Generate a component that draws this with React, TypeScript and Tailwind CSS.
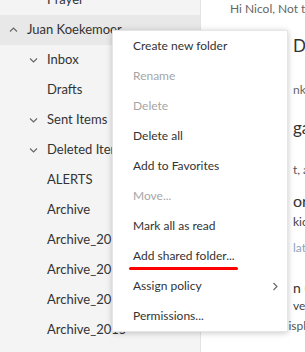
import React from "react";

type Folder = {
    label: string;
    level: 0 | 1;
    chevron?: "up" | "down";
    active?: boolean;
};

const folders: Folder[] = [
    { label: "Prayer", level: 1 },
    { label: "Juan Koekemoer", level: 0, chevron: "up", active: true },
    { label: "Inbox", level: 1, chevron: "down" },
    { label: "Drafts", level: 1 },
    { label: "Sent Items", level: 1, chevron: "down" },
    { label: "Deleted Items", level: 1, chevron: "down" },
    { label: "ALERTS", level: 1 },
    { label: "Archive", level: 1 },
    { label: "Archive_2018", level: 1 },
    { label: "Archive_2017", level: 1 },
    { label: "Archive_2016", level: 1 },
    { label: "Archive_2015", level: 1 },
];

const menuItems = [
    { label: "Create new folder" },
    { label: "Rename", disabled: true },
    { label: "Delete", disabled: true },
    { label: "Delete all" },
    { label: "Add to Favorites" },
    { label: "Move...", disabled: true },
    { label: "Mark all as read" },
    { label: "Add shared folder...", marked: true },
    { label: "Assign policy", submenu: true },
    { label: "Permissions..." },
];

const Chevron = ({ dir }: { dir: "up" | "down" | "right" }) => {
    const points =
        dir === "up" ? "1,5.5 4.5,2 8,5.5" : dir === "down" ? "1,2.5 4.5,6 8,2.5" : "2.5,1 6,4.5 2.5,8";
    return (
        <svg width="9" height="9" viewBox="0 0 9 9" fill="none">
            <polyline points={points} stroke="#666" strokeWidth="1.1" />
        </svg>
    );
};

// 메일 본문 (메뉴 뒤에 대부분 가려짐)
const previewLines = [
    { hidden: "", text: "Hi Nicol,  Not the newsletter", cls: "h-[18px] text-[12px] text-[#666]" },
    { hidden: "Re: ", text: "Daily Devotional", cls: "mt-[16px] h-[24px] text-[17px] text-[#333]" },
    { hidden: "Thank", text: "nk you all", cls: "mt-[23px] h-[18px] text-[12px] text-[#666]" },
    { hidden: "Re: ", text: "gathering", cls: "mt-[17px] h-[24px] text-[17px] text-[#333]" },
    { hidden: "Good", text: "t, all", cls: "mt-[21px] h-[18px] text-[12px] text-[#555]" },
    { hidden: "Pri", text: "orities", cls: "mt-[11px] h-[22px] text-[16px] text-[#333]" },
    { hidden: "Kick", text: "kickoff", cls: "mt-[1px] h-[18px] text-[12px] text-[#444]" },
    { hidden: "Upd", text: "later", cls: "mt-[8px] h-[18px] text-[12px] text-[#8ba3bf]" },
    { hidden: "Sun", text: "n (10am)", cls: "mt-[20px] h-[20px] text-[14px] text-[#333]" },
    { hidden: "Reser", text: "ved", cls: "h-[18px] text-[12px] text-[#444]" },
    { hidden: "", text: "email not displaying correctly", cls: "mt-[2px] h-[18px] text-[12px] text-[#555]" },
];

const App = () => {
    return (
        <div
            className="relative flex h-[352px] w-[305px] overflow-hidden bg-white"
            style={{ fontFamily: "Lato, 'Open Sans', sans-serif" }}
        >
            {/* 폴더 목록 */}
            <nav className="w-[201px] shrink-0 border-r border-[#e3e3e3] bg-[#f4f4f4]">
                <div className="-mt-[15px]">
                    {folders.map((f) => (
                        <div
                            key={f.label}
                            className={`flex h-[30px] items-center whitespace-nowrap text-[13px] text-[#333] ${
                                f.level === 0 ? "pl-[5px]" : "pl-[25px]"
                            } ${f.active ? "bg-[#e8e8e8]" : ""}`}
                        >
                            <span className="flex w-[16px] shrink-0 items-center justify-center">
                                {f.chevron && <Chevron dir={f.chevron} />}
                            </span>
                            <span className="ml-[6px]">{f.label}</span>
                        </div>
                    ))}
                </div>
            </nav>

            {/* 읽기 창 */}
            <div className="flex-1 overflow-hidden pl-[29px]">
                {previewLines.map((l, i) => (
                    <div key={i} className={`flex items-center whitespace-nowrap ${l.cls}`}>
                        {l.hidden && (
                            <span className="w-[63px] shrink-0 overflow-hidden">{l.hidden}</span>
                        )}
                        <span>{l.text}</span>
                    </div>
                ))}
            </div>

            {/* 컨텍스트 메뉴 */}
            <div className="absolute left-[112px] top-[30px] w-[176px] border border-[#e6e6e6] bg-white shadow-[0_1px_6px_rgba(0,0,0,0.22)]">
                {menuItems.map((m) => (
                    <div
                        key={m.label}
                        className={`flex h-[30px] items-center justify-between pl-[20px] pr-[7px] text-[12px] ${
                            m.disabled ? "text-[#a6a6a6]" : "text-[#333]"
                        }`}
                    >
                        <span className="relative">
                            {m.label}
                            {m.marked && (
                                <span className="absolute -left-[4px] top-[20px] h-[2.5px] w-[109px] rounded-full bg-[#ff0000]" />
                            )}
                        </span>
                        {m.submenu && <Chevron dir="right" />}
                    </div>
                ))}
            </div>
        </div>
    );
};

export default App;
